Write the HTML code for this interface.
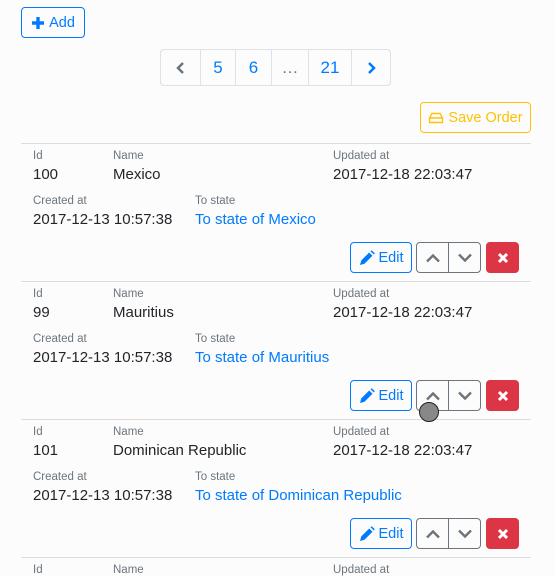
<!DOCTYPE html>
<html><head><style>
*{box-sizing:border-box}
body{margin:0;background:#fcfcfc;font-family:"Liberation Sans",sans-serif;color:#212529;width:555px;height:570px;overflow:hidden;position:relative}
.a{position:absolute}
.btn{position:absolute;border:1px solid;border-radius:4px;display:flex;align-items:center;justify-content:center;font-size:14.5px;padding-top:1px}
.lbl{position:absolute;font-size:11.5px;color:#6c757d}
.val{position:absolute;font-size:15px}
.lnk{color:#007bff}
.pg{position:absolute;top:49px;height:37px;border:1px solid #dee2e6;display:flex;align-items:center;justify-content:center;font-size:17px;color:#007bff}
.sep{position:absolute;left:21px;width:510px;height:1px;background:#dcdcdc}
</style></head><body>
<div class="btn" style="left:21px;top:7px;width:64px;height:31px;border-color:#007bff;color:#007bff"><svg width="14" height="14" viewBox="0 0 14 14" style="margin-right:4px"><path d="M7 1v12M1 7h12" stroke="#007bff" stroke-width="3.4"/></svg>Add</div>
<div style="position:absolute;left:160px;top:49px;width:231px;height:37px;border:1px solid #dee2e6;border-radius:4px"></div>
<div class="pg" style="left:160px;width:41px;border-radius:4px 0 0 4px;color:#6c757d"><svg width="10" height="14"><path d="M7 2L2 7l5 5" stroke="#6c757d" stroke-width="2.5" fill="none"/></svg></div>
<div class="pg" style="left:200px;width:36px">5</div>
<div class="pg" style="left:235px;width:37px">6</div>
<div class="pg" style="left:271px;width:38px;color:#6c757d">…</div>
<div class="pg" style="left:308px;width:44px">21</div>
<div class="pg" style="left:351px;width:40px;border-radius:0 4px 4px 0"><svg width="10" height="14"><path d="M3 2l5 5-5 5" stroke="#007bff" stroke-width="2.5" fill="none"/></svg></div>
<div class="btn" style="left:420px;top:102px;width:111px;height:31px;border-color:#ffc107;color:#ffc107"><svg width="16" height="12" viewBox="0 0 16 12" style="margin-right:4px"><path d="M1.5 6L4 1.5h8L14.5 6v4.5h-13z M1.5 6h13" stroke="#ffc107" stroke-width="1.4" fill="none"/></svg>Save Order</div>

<div id="rows"></div>
<script>
var d=[["100","Mexico"],["99","Mauritius"],["101","Dominican Republic"],["",""]];
var h='';
d.forEach(function(r,i){var t=143+i*138;
h+='<div class="sep" style="top:'+t+'px"></div>';
h+='<div class="lbl" style="left:33px;top:'+(t+7)+'px">Id</div><div class="lbl" style="left:113px;top:'+(t+7)+'px">Name</div><div class="lbl" style="left:333px;top:'+(t+7)+'px">Updated at</div>';
if(!r[0])return;
h+='<div class="val" style="left:33px;top:'+(t+23)+'px">'+r[0]+'</div><div class="val" style="left:113px;top:'+(t+23)+'px">'+r[1]+'</div><div class="val" style="left:333px;top:'+(t+23)+'px">2017-12-18 22:03:47</div>';
h+='<div class="lbl" style="left:33px;top:'+(t+52)+'px">Created at</div><div class="lbl" style="left:195px;top:'+(t+52)+'px">To state</div>';
h+='<div class="val" style="left:33px;top:'+(t+68)+'px">2017-12-13 10:57:38</div><div class="val lnk" style="left:195px;top:'+(t+68)+'px">To state of '+r[1]+'</div>';
var b=t+99;
h+='<div class="btn" style="left:350px;top:'+b+'px;width:62px;height:31px;border-color:#007bff;color:#007bff"><svg width="16" height="16" viewBox="0 0 16 16" style="margin-right:4px"><path d="M1 15l1.2-4.5 8-8 3.3 3.3-8 8z M11.5 1.2l1.2-1 3.1 3.1-1 1.2z" fill="#007bff"/></svg>Edit</div>';
h+='<div class="btn" style="left:416px;top:'+b+'px;width:33px;height:31px;border-color:#6c757d;border-radius:4px 0 0 4px"><svg width="16" height="10"><path d="M2 8.5l6-6 6 6" stroke="#6c757d" stroke-width="2.4" fill="none"/></svg></div>';
h+='<div class="btn" style="left:448px;top:'+b+'px;width:33px;height:31px;border-color:#6c757d;border-radius:0 4px 4px 0"><svg width="16" height="10"><path d="M2 1.5l6 6 6-6" stroke="#6c757d" stroke-width="2.4" fill="none"/></svg></div>';
h+='<div class="btn" style="left:486px;top:'+b+'px;width:33px;height:31px;border-color:#dc3545;background:#dc3545"><svg width="12" height="12"><path d="M2 2l8 8M10 2l-8 8" stroke="#fff" stroke-width="3"/></svg></div>';
});
document.getElementById('rows').innerHTML=h;
</script>
<div class="a" style="left:419px;top:402px;width:20px;height:20px;border-radius:50%;background:#888;border:1.5px solid #222"></div>
</body></html>
